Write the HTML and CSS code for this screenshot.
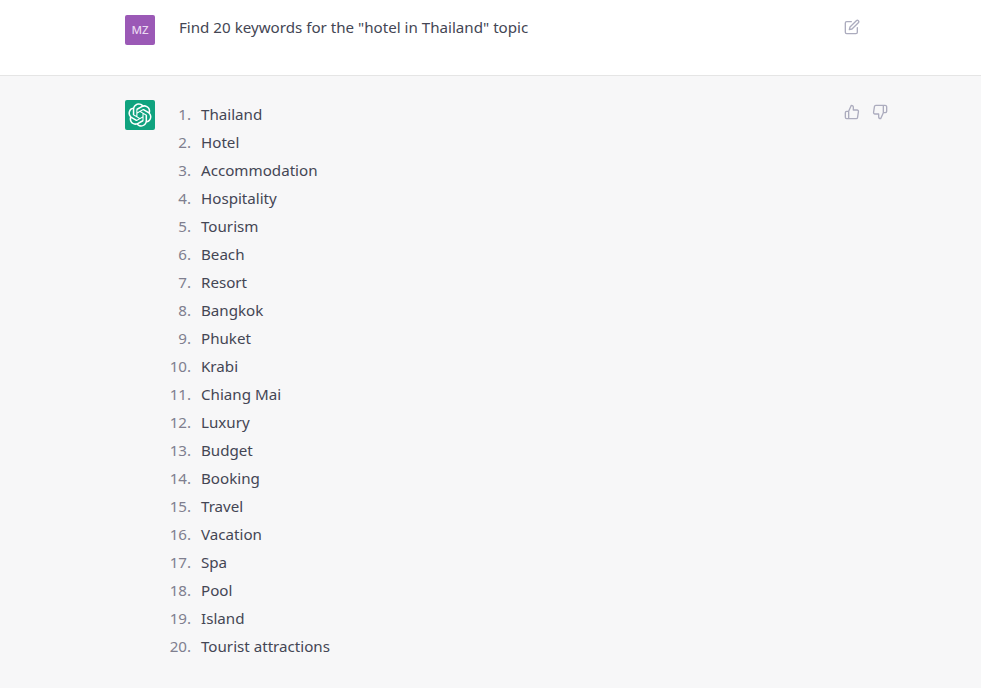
FILE: index.html
```html
<!DOCTYPE html>
<html lang="en">
<head>
    <meta charset="UTF-8">
    <meta name="viewport" content="width=device-width, initial-scale=1.0">
    <title>Keywords chat</title>
    <link rel="stylesheet" href="styles.css">
</head>
<body>
    <div class="message message-user">
        <div class="avatar avatar-user">MZ</div>
        <div class="content">
            <p class="prompt">Find 20 keywords for the "hotel in Thailand" topic</p>
        </div>
        <div class="actions">
            <svg class="icon" viewBox="0 0 24 24"><path d="M11 4H4a2 2 0 0 0-2 2v14a2 2 0 0 0 2 2h14a2 2 0 0 0 2-2v-7"/><path d="M18.5 2.5a2.121 2.121 0 0 1 3 3L12 15l-4 1 1-4 9.5-9.5z"/></svg>
        </div>
    </div>

    <div class="message message-bot">
        <div class="avatar avatar-bot">
            <svg class="logo" viewBox="0 0 41 41"><path d="M37.5324 16.8707C37.9808 15.5241 38.1363 14.0974 37.9886 12.6859C37.8409 11.2744 37.3934 9.91076 36.676 8.68622C35.6126 6.83404 33.9882 5.3676 32.0373 4.4985C30.0864 3.62941 27.9098 3.40259 25.8215 3.85078C24.8796 2.7893 23.7219 1.94125 22.4257 1.36341C21.1295 0.785575 19.7249 0.491269 18.3058 0.500197C16.1708 0.495044 14.0893 1.16803 12.3614 2.42214C10.6335 3.67624 9.34853 5.44666 8.6917 7.47815C7.30085 7.76286 5.98686 8.3414 4.8377 9.17505C3.68854 10.0087 2.73073 11.0782 2.02839 12.312C0.956464 14.1591 0.498905 16.2988 0.721698 18.4228C0.944492 20.5467 1.83612 22.5449 3.268 24.1293C2.81966 25.4759 2.66413 26.9026 2.81182 28.3141C2.95951 29.7256 3.40701 31.0892 4.12437 32.3138C5.18791 34.1659 6.8123 35.6322 8.76321 36.5013C10.7141 37.3704 12.8907 37.5973 14.979 37.1492C15.9208 38.2107 17.0786 39.0587 18.3747 39.6366C19.6709 40.2144 21.0755 40.5087 22.4946 40.4998C24.6307 40.5054 26.7133 39.8321 28.4418 38.5772C30.1704 37.3223 31.4556 35.5506 32.1119 33.5179C33.5027 33.2332 34.8167 32.6547 35.9659 31.821C37.115 30.9874 38.0728 29.9178 38.7752 28.684C39.8458 26.8371 40.3023 24.6979 40.0789 22.5748C39.8556 20.4517 38.9639 18.4544 37.5324 16.8707ZM22.4978 37.8849C20.7443 37.8874 19.0459 37.2733 17.6994 36.1501C17.7601 36.117 17.8666 36.0586 17.936 36.0161L25.9004 31.4156C26.1003 31.3019 26.2663 31.137 26.3813 30.9378C26.4964 30.7386 26.5563 30.5124 26.5549 30.2825V19.0542L29.9213 20.998C29.9389 21.0068 29.9541 21.0198 29.9656 21.0359C29.977 21.052 29.9842 21.0707 29.9867 21.0902V30.3889C29.9842 32.375 29.1946 34.2791 27.7909 35.6841C26.3872 37.0892 24.4838 37.8806 22.4978 37.8849ZM6.39227 31.0064C5.51397 29.4888 5.19742 27.7107 5.49804 25.9832C5.55718 26.0187 5.66048 26.0818 5.73461 26.1244L13.699 30.7248C13.8975 30.8408 14.1233 30.902 14.3532 30.902C14.583 30.902 14.8088 30.8408 15.0073 30.7248L24.731 25.1103V28.9979C24.7321 29.0177 24.7283 29.0376 24.7199 29.0556C24.7115 29.0736 24.6988 29.0893 24.6829 29.1012L16.6317 33.7497C14.9096 34.7416 12.8643 35.0097 10.9447 34.4954C9.02506 33.9811 7.38785 32.7263 6.39227 31.0064ZM4.29707 13.6194C5.17156 12.0998 6.55279 10.9364 8.19885 10.3327C8.19885 10.4013 8.19491 10.5228 8.19491 10.6071V19.808C8.19351 20.0378 8.25334 20.2638 8.36823 20.4629C8.48312 20.6619 8.64893 20.8267 8.84863 20.9404L18.5723 26.5542L15.206 28.4979C15.1894 28.5089 15.1703 28.5155 15.1505 28.5173C15.1307 28.5191 15.1107 28.516 15.0924 28.5082L7.04046 23.8557C5.32135 22.8601 4.06716 21.2235 3.55289 19.3046C3.03862 17.3858 3.30624 15.3413 4.29707 13.6194ZM31.955 20.0556L22.2312 14.4411L25.5976 12.4981C25.6142 12.4872 25.6333 12.4805 25.6531 12.4787C25.6729 12.4769 25.6928 12.4801 25.7111 12.4879L33.7631 17.1364C34.9967 17.849 36.0017 18.8982 36.6606 20.1613C37.3194 21.4244 37.6047 22.849 37.4832 24.2684C37.3617 25.6878 36.8382 27.0432 35.9743 28.1759C35.1103 29.3086 33.9415 30.1717 32.6047 30.6641C32.6047 30.5947 32.6047 30.4733 32.6047 30.3889V21.188C32.6066 20.9586 32.5474 20.7328 32.4332 20.5338C32.319 20.3348 32.154 20.1698 31.955 20.0556ZM35.3055 15.0128C35.2464 14.9765 35.1431 14.9142 35.069 14.8717L27.1045 10.2712C26.906 10.1554 26.6803 10.0943 26.4504 10.0943C26.2206 10.0943 25.9948 10.1554 25.7963 10.2712L16.0726 15.8858V11.9982C16.0715 11.9783 16.0753 11.9585 16.0837 11.9405C16.0921 11.9225 16.1048 11.9068 16.1207 11.8949L24.1719 7.25025C25.4053 6.53903 26.8158 6.19376 28.2383 6.25482C29.6608 6.31589 31.0364 6.78077 32.2044 7.59508C33.3723 8.40939 34.2842 9.53945 34.8334 10.8531C35.3826 12.1667 35.5464 13.6095 35.3055 15.0128ZM14.2424 21.9419L10.8752 19.9981C10.8576 19.9893 10.8423 19.9763 10.8309 19.9602C10.8195 19.9441 10.8122 19.9254 10.8098 19.9058V10.6071C10.8107 9.18295 11.2173 7.78848 11.9819 6.58696C12.7466 5.38544 13.8377 4.42659 15.1275 3.82264C16.4173 3.21869 17.8524 2.99464 19.2649 3.1767C20.6775 3.35876 22.0089 3.93941 23.1034 4.85067C23.0427 4.88379 22.937 4.94215 22.8668 4.98473L14.9024 9.58517C14.7025 9.69878 14.5366 9.86356 14.4215 10.0626C14.3065 10.2616 14.2466 10.4877 14.2479 10.7175L14.2424 21.9419ZM16.071 17.9991L20.4018 15.4978L24.7325 17.9975V22.9985L20.4018 25.4983L16.071 22.9985V17.9991Z"/></svg>
        </div>
        <div class="content">
            <ol class="keywords">
                <li>Thailand</li>
                <li>Hotel</li>
                <li>Accommodation</li>
                <li>Hospitality</li>
                <li>Tourism</li>
                <li>Beach</li>
                <li>Resort</li>
                <li>Bangkok</li>
                <li>Phuket</li>
                <li>Krabi</li>
                <li>Chiang Mai</li>
                <li>Luxury</li>
                <li>Budget</li>
                <li>Booking</li>
                <li>Travel</li>
                <li>Vacation</li>
                <li>Spa</li>
                <li>Pool</li>
                <li>Island</li>
                <li>Tourist attractions</li>
            </ol>
        </div>
        <div class="actions">
            <svg class="icon" viewBox="0 0 24 24"><path d="M14 9V5a3 3 0 0 0-3-3l-4 9v11h11.28a2 2 0 0 0 2-1.7l1.38-9a2 2 0 0 0-2-2.3zM7 22H4a2 2 0 0 1-2-2v-7a2 2 0 0 1 2-2h3"/></svg>
            <svg class="icon" viewBox="0 0 24 24"><path d="M10 15v4a3 3 0 0 0 3 3l4-9V2H5.72a2 2 0 0 0-2 1.7l-1.38 9a2 2 0 0 0 2 2.3zm7-13h2.67A2.31 2.31 0 0 1 22 4v7a2.31 2.31 0 0 1-2.33 2H17"/></svg>
        </div>
    </div>
</body>
</html>
```

FILE: styles.css
```css
html, body {
    margin: 0;
    padding: 0;
}
body {
    font-family: "Noto Sans", Arial, sans-serif;
    font-size: 15.15px;
    line-height: 28px;
    color: #444654;
    background-color: #f7f7f8;
}
.message {
    display: flex;
    gap: 24px;
    padding-left: 125px;
    padding-right: 93px;
}
.message-user {
    height: 75px;
    background-color: #fff;
    border-bottom: 1px solid #e5e5e5;
}
.message-user .avatar {
    margin-top: 15px;
}
.message-user .actions {
    margin-top: 19px;
    margin-right: 28px;
}
.message-user .content {
    margin-top: 13px;
}
.message-bot {
    padding-top: 24px;
    padding-bottom: 28px;
}
.avatar {
    width: 30px;
    height: 30px;
    flex-shrink: 0;
    border-radius: 2px;
    display: flex;
    align-items: center;
    justify-content: center;
}
.avatar-user {
    background-color: #9b59b6;
    color: #ead9f2;
    font-size: 11.5px;
    font-weight: 500;
}
.avatar-bot {
    background-color: #10a37f;
}
.logo {
    width: 24px;
    height: 24px;
    fill: #fff;
}
.content {
    flex: 1;
}
.prompt {
    margin: 0;
}
.keywords {
    margin: 0;
    padding-left: 16px;
}
.keywords li {
    padding-left: 6px;
}
.keywords li::marker {
    color: #7f7f8f;
}
.actions {
    display: flex;
    gap: 12px;
    height: 16px;
    margin-top: 4px;
}
.icon {
    width: 16px;
    height: 16px;
    fill: none;
    stroke: #acacbe;
    stroke-width: 2;
    stroke-linecap: round;
    stroke-linejoin: round;
}
```
